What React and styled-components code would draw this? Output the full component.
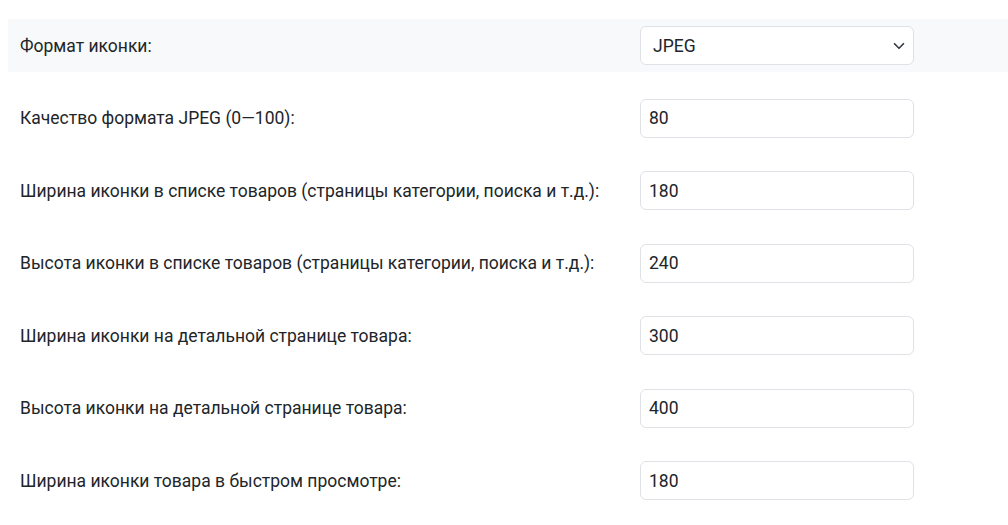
import React from "react";
import styled, { createGlobalStyle } from "styled-components";

const Global = createGlobalStyle`
  html, body { margin: 0; padding: 0; background: #fff; }
  body {
    padding: 8px 0 0 8px;
    font-family: Roboto, "Noto Sans", "Liberation Sans", sans-serif;
    font-size: 17.5px;
    color: #212529;
    overflow: hidden;
  }
`;

const Table = styled.div`
  display: flex;
  flex-direction: column;
  gap: 19.5px;
  padding-top: 11px;
  width: 1000px;
`;

const Row = styled.div`
  display: grid;
  grid-template-columns: 620px 1fr;
  align-items: center;
  height: 53px;
  background: ${(p) => (p.$shaded ? "#f8f9fa" : "transparent")};
`;

const Label = styled.div`
  padding: 0 12px;
  line-height: 26px;
`;

const Cell = styled.div`
  padding: 0 12px;
`;

const Input = styled.input`
  box-sizing: border-box;
  display: block;
  width: 274px;
  height: 39px;
  padding: 0 8px;
  border: 1px solid #dee2e6;
  border-radius: 6px;
  background: #fff;
  font: inherit;
  color: #212529;
  outline: none;
`;

const SelectWrap = styled.div`
  position: relative;
  width: 274px;
`;

const Select = styled.select`
  box-sizing: border-box;
  display: block;
  width: 274px;
  height: 39px;
  padding: 0 36px 0 12px;
  border: 1px solid #dee2e6;
  border-radius: 6px;
  background: #fff;
  font: inherit;
  color: #212529;
  appearance: none;
  -webkit-appearance: none;
  outline: none;
`;

const Chevron = styled.svg`
  position: absolute;
  right: 9px;
  top: 50%;
  margin-top: -6px;
  width: 12px;
  height: 12px;
  pointer-events: none;
`;

const rows = [
  ["Качество формата JPEG (0—100):", "80"],
  ["Ширина иконки в списке товаров (страницы категории, поиска и т.д.):", "180"],
  ["Высота иконки в списке товаров (страницы категории, поиска и т.д.):", "240"],
  ["Ширина иконки на детальной странице товара:", "300"],
  ["Высота иконки на детальной странице товара:", "400"],
  ["Ширина иконки товара в быстром просмотре:", "180"],
];

export default function App() {
  return (
    <>
      <Global />
      <Table>
        <Row $shaded>
          <Label>Формат иконки:</Label>
          <Cell>
            <SelectWrap>
              <Select defaultValue="JPEG">
                <option>JPEG</option>
                <option>PNG</option>
                <option>WEBP</option>
              </Select>
              <Chevron viewBox="0 0 16 16">
                <path
                  d="M2 5l6 6 6-6"
                  fill="none"
                  stroke="#343a40"
                  strokeWidth="2.2"
                  strokeLinecap="round"
                  strokeLinejoin="round"
                />
              </Chevron>
            </SelectWrap>
          </Cell>
        </Row>
        {rows.map(([label, value], i) => (
          <Row key={i}>
            <Label>{label}</Label>
            <Cell>
              <Input defaultValue={value} />
            </Cell>
          </Row>
        ))}
      </Table>
    </>
  );
}
